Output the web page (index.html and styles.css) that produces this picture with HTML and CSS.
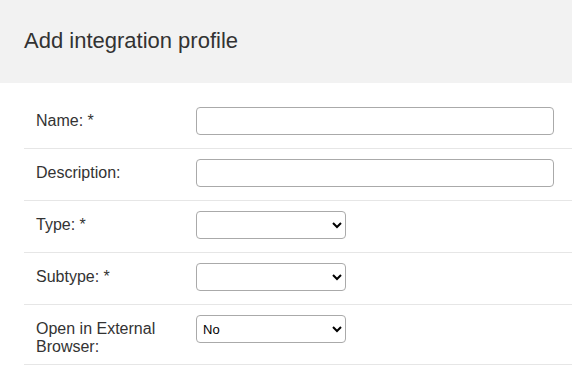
FILE: index.html
```html
<!DOCTYPE html>
<html lang="en">
<head>
    <meta charset="UTF-8">
    <meta name="viewport" content="width=device-width, initial-scale=1.0">
    <title>Add integration profile</title>
    <link rel="stylesheet" href="styles.css">
</head>
<body>
    <header class="page-header">
        <h1>Add integration profile</h1>
    </header>
    <form class="profile-form">
        <div class="form-row">
            <label for="name">Name: *</label>
            <div class="control"><input type="text" id="name" class="text-input"></div>
        </div>
        <div class="form-row">
            <label for="description">Description:</label>
            <div class="control"><input type="text" id="description" class="text-input"></div>
        </div>
        <div class="form-row">
            <label for="type">Type: *</label>
            <div class="control">
                <select id="type" class="select-input">
                    <option></option>
                </select>
            </div>
        </div>
        <div class="form-row">
            <label for="subtype">Subtype: *</label>
            <div class="control">
                <select id="subtype" class="select-input">
                    <option></option>
                </select>
            </div>
        </div>
        <div class="form-row">
            <label for="external">Open in External Browser:</label>
            <div class="control">
                <select id="external" class="select-input">
                    <option>No</option>
                    <option>Yes</option>
                </select>
            </div>
        </div>
    </form>
</body>
</html>
```

FILE: styles.css
```css
body {
    margin: 0;
    padding: 0;
    background: #fff;
    color: #333;
    font-family: "Liberation Sans", Arial, sans-serif;
}

.page-header {
    background: #f2f2f2;
    padding: 28px 24px 30px;
}

.page-header h1 {
    margin: 0;
    font-size: 22px;
    font-weight: normal;
    line-height: 25px;
    color: #333;
}

.profile-form {
    margin: 14px 0 0 24px;
}

.form-row {
    display: grid;
    grid-template-columns: 148px 1fr;
    column-gap: 12px;
    padding: 10px 18px 8px 12px;
    border-bottom: 1px solid #e6e6e6;
}

.form-row label {
    font-size: 16px;
    line-height: 18px;
    padding-top: 5px;
}

.control {
    padding-bottom: 5px;
}

.text-input,
.select-input {
    box-sizing: border-box;
    height: 28px;
    margin: 0;
    border: 1px solid #aaa;
    border-radius: 4px;
    background: #fff;
    font-family: "Liberation Sans", Arial, sans-serif;
    font-size: 13px;
    color: #000;
    display: block;
}

.text-input {
    width: 100%;
    padding: 0 6px;
}

.select-input {
    width: 150px;
    padding: 0 2px;
}
```
